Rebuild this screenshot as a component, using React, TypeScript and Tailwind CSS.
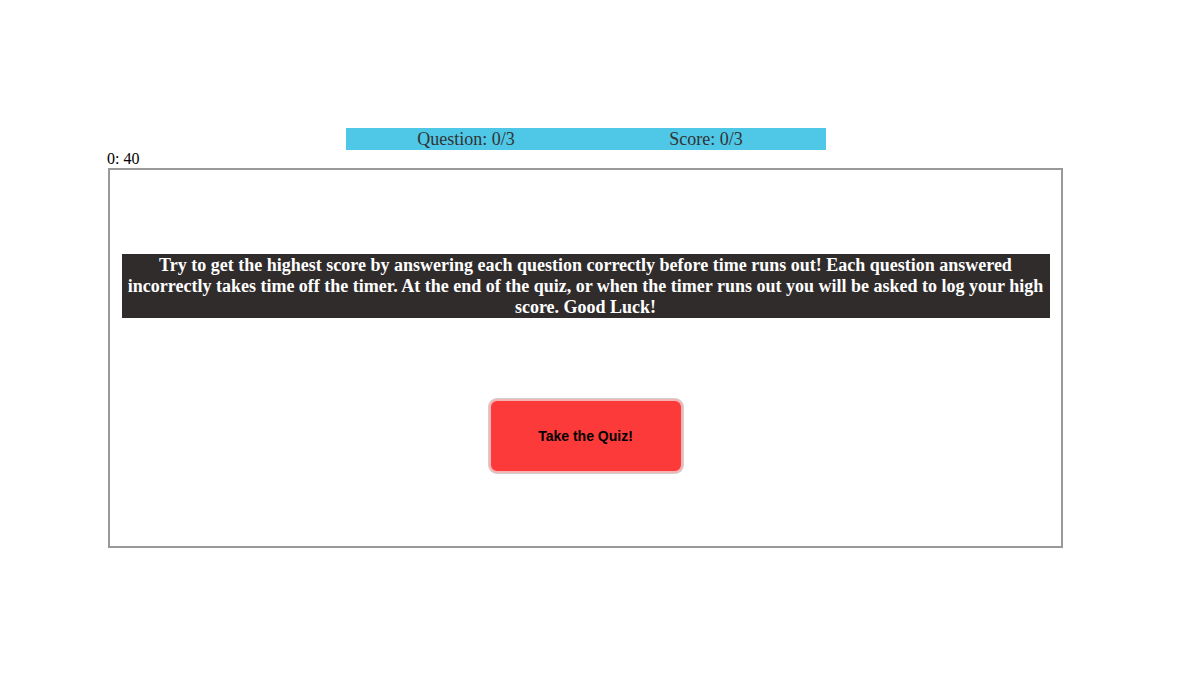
export default function App() {
  return (
    <div className="min-h-[700px] w-full bg-white pt-[128px] font-['Liberation_Serif',serif]">
      {/* Progress bar */}
      <div className="ml-[346px] flex h-[22px] w-[480px] items-center bg-[#4fc7e6] text-[18px] leading-[22px] text-[#333]">
        <div className="w-[240px] text-center">Question: 0/3</div>
        <div className="w-[240px] text-center">Score: 0/3</div>
      </div>

      {/* Timer */}
      <div className="ml-[107px] h-[18px] text-[16px] leading-[18px] text-black">0: 40</div>

      {/* Quiz box */}
      <div className="ml-[108px] flex h-[380px] w-[955px] flex-col items-center border-2 border-[#999] pt-[84px]">
        <p className="w-[928px] bg-[#302c2c] pt-[1px] text-center text-[18px] font-bold leading-[21px] text-white">
          Try to get the highest score by answering each question correctly before time runs out! Each question answered
          incorrectly takes time off the timer. At the end of the quiz, or when the timer runs out you will be asked to log your high
          score. Good Luck!
        </p>
        <button className="mt-[81px] h-[74px] w-[194px] rounded-[8px] border-2 border-[#f4b4b4] bg-[#fc3a3a] font-['Liberation_Sans',sans-serif] text-[14px] font-bold text-black shadow-[0_0_0_1px_#d0d0d0]">
          Take the Quiz!
        </button>
      </div>
    </div>
  );
}
